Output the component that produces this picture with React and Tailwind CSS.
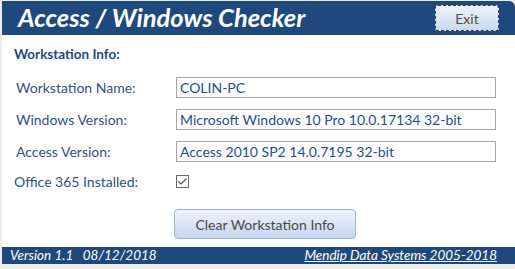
import React from 'react'

// Access / Windows Checker form
const font = { fontFamily: 'Lato, "Open Sans", sans-serif' }

function Row({ label, value }) {
  return (
    <div className="flex items-center h-[21px]">
      <div className="w-[174px] pl-[14px] text-[14px] text-[#2f5283]">{label}</div>
      <div className="w-[320px] h-[21px] border border-[#a6a6a6] bg-white px-[3px] flex items-center text-[14px] text-[#1f4e8c]">
        {value}
      </div>
    </div>
  )
}

export default function App() {
  return (
    <div style={font} className="w-[515px] h-[269px] bg-[#ececec] pl-[2px] pt-px flex flex-col">
      {/* Header */}
      <div className="h-[34px] bg-[#1f497d] rounded-tr-[6px] flex items-center justify-between pl-4 pr-[16px]">
        <span className="text-white italic font-bold text-[25.5px] leading-none">
          Access / Windows Checker
        </span>
        <button className="w-[64px] h-[26px] rounded-[3px] border border-dashed border-[#304050] bg-gradient-to-b from-[#eef3fb] to-[#c9d9f1] text-[14px] text-[#5b4a3c]">
          Exit
        </button>
      </div>

      {/* Body */}
      <div className="flex-1 bg-white flex flex-col">
        <div className="pl-[12px] pt-[9px] text-[13.5px] font-bold text-[#1f497d]">Workstation Info:</div>
        <div className="mt-[13px] flex flex-col gap-[11px]">
          <Row label="Workstation Name:" value="COLIN-PC" />
          <Row label="Windows Version:" value="Microsoft Windows 10 Pro 10.0.17134 32-bit" />
          <Row label="Access Version:" value="Access 2010 SP2 14.0.7195 32-bit" />
        </div>
        <div className="flex items-center mt-[12px] h-[14px]">
          <div className="w-[174px] pl-[12px] text-[14px] text-[#2f5283]">Office 365 Installed:</div>
          <div className="w-[13px] h-[13px] border border-[#6b6b6b] bg-white flex items-center justify-center">
            <svg width="11" height="11" viewBox="0 0 11 11">
              <path d="M1.5 5.5 L4 8 L9.5 2.5" stroke="#555" strokeWidth="1.2" fill="none" />
            </svg>
          </div>
        </div>
        <div className="pl-[172px] mt-[21px]">
          <button className="w-[182px] h-[30px] rounded-[4px] border border-[#9db3d6] bg-gradient-to-b from-[#eef3fb] to-[#c6d6ef] text-[14px] text-[#4a4a4a]">
            Clear Workstation Info
          </button>
        </div>
      </div>

      {/* Footer */}
      <div className="h-[17px] bg-[#1f497d] flex items-center justify-between pl-[8px] pr-[18px] text-white italic text-[13.5px] leading-none mb-[5px]">
        <span>Version 1.1&nbsp;&nbsp;&nbsp;08/12/2018</span>
        <span className="underline">Mendip Data Systems 2005-2018</span>
      </div>
    </div>
  )
}
